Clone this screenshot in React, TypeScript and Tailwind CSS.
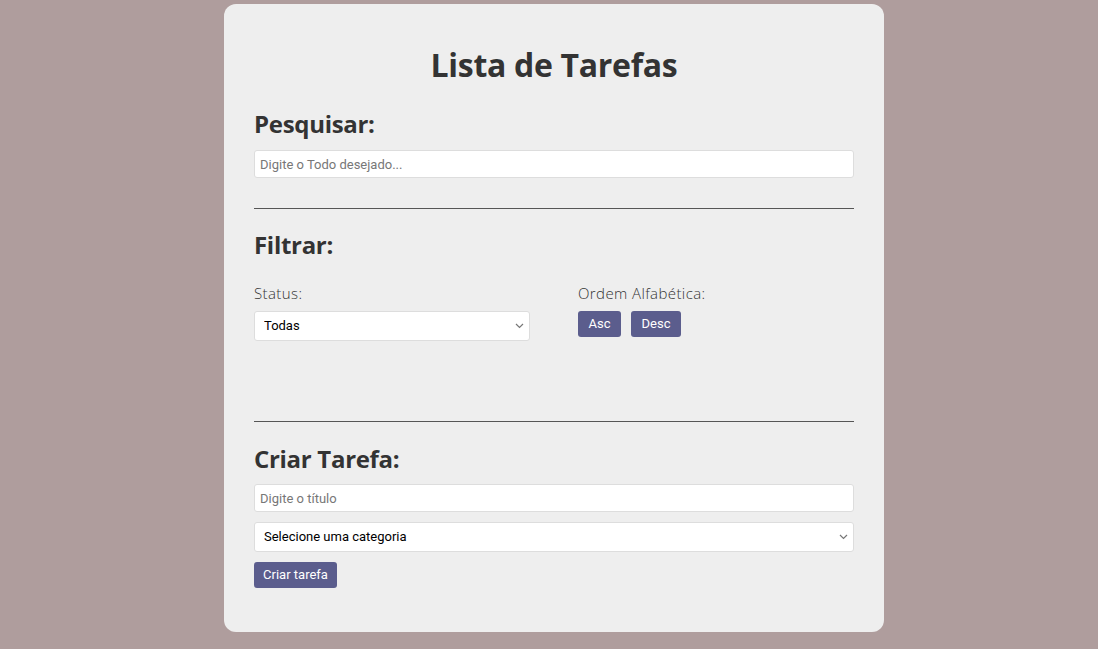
import React from "react";

const Chevron = () => (
  <svg className="pointer-events-none absolute right-[6px] top-1/2 -translate-y-1/2" width="9" height="6" viewBox="0 0 9 6" fill="none">
    <path d="M1 1l3.5 3.5L8 1" stroke="#777" strokeWidth="1.2" />
  </svg>
);

export default function App() {
  const heading = "text-[24px] font-bold text-[#333] leading-none font-['Open_Sans',sans-serif] tracking-[-0.3px]";
  const inputCls =
    "w-full h-[28px] bg-white border border-[#ddd] rounded-[3px] px-[5px] text-[13px] text-[#333] placeholder:text-[#777] outline-none font-['Roboto',sans-serif]";
  const btn =
    "h-[26px] rounded-[3px] bg-[#5b5d8d] text-white text-[13px] font-normal font-['Roboto',sans-serif]";
  const label = "text-[15px] font-light text-[#333] leading-none font-['Open_Sans',sans-serif] tracking-[0.4px]";
  return (
    <div className="min-h-[649px] w-full bg-[#af9d9d] flex justify-center pt-[4px] pl-[10px]">
      <div className="w-[660px] h-[628px] bg-[#eeeeee] rounded-[12px] px-[30px] pt-[45px] flex flex-col">
        <h1 className="text-center text-[32px] font-bold text-[#333] leading-none font-['Open_Sans',sans-serif] tracking-[-0.3px]">
          Lista de Tarefas
        </h1>

        <h2 className={heading + " mt-[31px]"}>Pesquisar:</h2>
        <input className={inputCls + " mt-[14px]"} placeholder="Digite o Todo desejado..." />

        <div className="h-px bg-[#555] mt-[30px]" />

        <h2 className={heading + " mt-[24px]"}>Filtrar:</h2>
        <div className="flex gap-[48px] mt-[29px]">
          <div className="flex-1 flex flex-col">
            <label className={label}>Status:</label>
            <div className="relative mt-[10px]">
              <select className="w-full h-[30px] appearance-none bg-white border border-[#ddd] rounded-[3px] pl-[9px] text-[13px] text-black font-['Roboto',sans-serif] outline-none">
                <option>Todas</option>
              </select>
              <Chevron />
            </div>
          </div>
          <div className="flex-1 flex flex-col">
            <label className={label}>Ordem Alfabética:</label>
            <div className="flex gap-[10px] mt-[10px]">
              <button className={btn + " w-[43px]"}>Asc</button>
              <button className={btn + " w-[50px]"}>Desc</button>
            </div>
          </div>
        </div>

        <div className="h-px bg-[#555] mt-[80px]" />

        <h2 className={heading + " mt-[25px]"}>Criar Tarefa:</h2>
        <input className={inputCls + " mt-[13px]"} placeholder="Digite o título" />
        <div className="relative mt-[10px]">
          <select className="w-full h-[30px] appearance-none bg-white border border-[#ddd] rounded-[3px] pl-[9px] text-[13px] text-black font-['Roboto',sans-serif] outline-none">
            <option>Selecione uma categoria</option>
          </select>
          <Chevron />
        </div>
        <div className="mt-[9px]">
          <button className={btn + " w-[83px]"}>Criar tarefa</button>
        </div>
      </div>
    </div>
  );
}
